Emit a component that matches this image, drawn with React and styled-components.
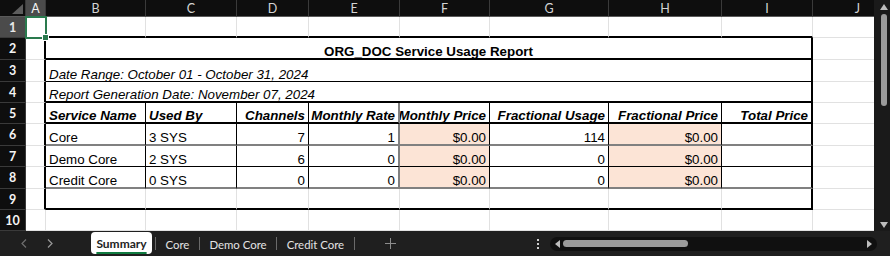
import React from "react";
import styled, { createGlobalStyle } from "styled-components";

const GlobalStyle = createGlobalStyle`
  html, body {
    margin: 0;
    padding: 0;
    background: #1f1f1f;
  }
  body {
    width: 890px;
    height: 256px;
    overflow: hidden;
  }
`;

const COLS = ["A", "B", "C", "D", "E", "F", "G", "H", "I", "J"];
const WIDTHS = [20, 100, 91, 72, 91, 90, 119, 113, 91, 90];
const HEIGHTS = [21, 22, 22, 21, 21, 22, 21, 22, 21, 21];

const LINE = {
  grid: "1px solid #e1e1e1",
  thin: "1px solid #000",
  medium: "2px solid #000",
  gray: "2px solid #808080",
};

const PEACH = "#fce4d6";

const HEAD = [
  { text: "Service Name" },
  { text: "Used By" },
  { text: "Channels", align: "right" },
  { text: "Monthly Rate", align: "right" },
  { text: "Monthly Price", align: "right" },
  { text: "Fractional Usage", align: "right" },
  { text: "Fractional Price", align: "right" },
  { text: "Total Price", align: "right" },
];

const ROWS = [
  ["Core", "3 SYS", "7", "1", "$0.00", "114", "$0.00", ""],
  ["Demo Core", "2 SYS", "6", "0", "$0.00", "0", "$0.00", ""],
  ["Credit Core", "0 SYS", "0", "0", "$0.00", "0", "$0.00", ""],
];

const BOTTOMS = { 1: "medium", 2: "medium", 3: "thin", 4: "medium", 5: "medium", 6: "gray", 7: "thin", 8: "gray", 9: "medium" };

function rightLine(row, last) {
  if (row >= 2 && row <= 9 && (last === 0 || last === 8)) return "medium";
  if (row >= 5 && row <= 8 && last >= 1 && last <= 7) return last === 4 ? "gray" : "thin";
  return "grid";
}

function bottomLine(row, col) {
  if (col >= 1 && col <= 8 && BOTTOMS[row]) return BOTTOMS[row];
  return "grid";
}

function buildRow(row) {
  if (row === 2) return [{ col: 1, span: 8, text: "ORG_DOC Service Usage Report", bold: true, align: "center" }];
  if (row === 3) return [{ col: 1, span: 8, text: "Date Range: October 01 - October 31, 2024", italic: true }];
  if (row === 4) return [{ col: 1, span: 8, text: "Report Generation Date: November 07, 2024", italic: true }];
  if (row === 5) return HEAD.map((h, i) => ({ col: i + 1, text: h.text, align: h.align, bold: true, italic: true }));
  if (row >= 6 && row <= 8) {
    return ROWS[row - 6].map((v, i) => ({
      col: i + 1,
      text: v,
      align: i < 2 ? "left" : "right",
      fill: i === 4 || i === 6 ? PEACH : null,
    }));
  }
  return [];
}

export default function App() {
  const rows = [];
  for (let r = 1; r <= 10; r++) {
    const specials = buildRow(r);
    const cells = [];
    let c = 0;
    while (c < COLS.length) {
      const s = specials.find((x) => x.col === c);
      const span = s ? s.span || 1 : 1;
      const last = c + span - 1;
      cells.push(
        <Cell
          key={`${r}-${c}`}
          $col={c + 2}
          $row={r + 1}
          $span={span}
          $r={rightLine(r, last)}
          $b={bottomLine(r, c)}
          $fill={s && s.fill}
          $align={s && s.align}
          $bold={s && s.bold}
          $italic={s && s.italic}
        >
          {s ? s.text : null}
          {r === 1 && c === 0 && (
            <Selection>
              <FillHandle />
            </Selection>
          )}
        </Cell>
      );
      c += span;
    }
    rows.push(
      <RowHead key={`h${r}`} $row={r + 1} $active={r === 1}>
        {r}
      </RowHead>
    );
    rows.push(...cells);
  }

  return (
    <>
      <GlobalStyle />
      <Window>
        <Workspace>
          <Sheet>
            <Corner>
              <CornerMark />
            </Corner>
            {COLS.map((l, i) => (
              <ColHead key={l} $col={i + 2} $active={i === 0}>
                {l}
              </ColHead>
            ))}
            {rows}
          </Sheet>
          <VScroll>
            <Arrow viewBox="0 0 8 6" width="8" height="6">
              <polygon points="0,6 4,0 8,6" fill="#bdbdbd" />
            </Arrow>
            <VThumb />
            <Spacer />
            <Arrow viewBox="0 0 8 6" width="8" height="6">
              <polygon points="0,0 8,0 4,6" fill="#bdbdbd" />
            </Arrow>
          </VScroll>
        </Workspace>
        <TabBar>
          <Nav>
            <svg width="6" height="9" viewBox="0 0 6 9">
              <polyline points="5,0.5 1,4.5 5,8.5" fill="none" stroke="#6f6f6f" strokeWidth="1.2" />
            </svg>
            <svg width="6" height="9" viewBox="0 0 6 9">
              <polyline points="1,0.5 5,4.5 1,8.5" fill="none" stroke="#9a9a9a" strokeWidth="1.2" />
            </svg>
          </Nav>
          <ActiveTab>Summary</ActiveTab>
          <Sep $first />
          <Tab>Core</Tab>
          <Sep />
          <Tab>Demo Core</Tab>
          <Sep />
          <Tab>Credit Core</Tab>
          <Sep />
          <AddTab>
            <svg width="11" height="11" viewBox="0 0 11 11">
              <path d="M5.5 0v11M0 5.5h11" stroke="#8c8c8c" strokeWidth="1" />
            </svg>
          </AddTab>
          <Spacer />
          <Dots>
            <i />
            <i />
            <i />
          </Dots>
          <HScroll>
            <svg width="5" height="8" viewBox="0 0 5 8">
              <polygon points="5,0 0,4 5,8" fill="#bdbdbd" />
            </svg>
            <HThumb />
            <Spacer />
            <svg width="5" height="8" viewBox="0 0 5 8">
              <polygon points="0,0 5,4 0,8" fill="#bdbdbd" />
            </svg>
          </HScroll>
        </TabBar>
      </Window>
    </>
  );
}

const Window = styled.div`
  width: 890px;
  height: 256px;
  display: flex;
  flex-direction: column;
  background: #1f1f1f;
  overflow: hidden;
`;

const Workspace = styled.div`
  display: flex;
  height: 231px;
`;

const Sheet = styled.div`
  display: grid;
  grid-template-columns: 26px ${WIDTHS.map((w) => `${w}px`).join(" ")};
  grid-template-rows: 17px ${HEIGHTS.map((h) => `${h}px`).join(" ")};
  width: 874px;
  height: 231px;
  overflow: hidden;
  background: #fff;
  font-family: "Liberation Sans", Arial, sans-serif;
  font-size: 13.33px;
  color: #000;
`;

const Corner = styled.div`
  grid-column: 1;
  grid-row: 1;
  background: #0e0e0e;
  border-right: 1px solid #3a3a3a;
  border-bottom: 1px solid #5a5a5a;
  display: flex;
  align-items: flex-end;
  justify-content: flex-end;
  padding: 0 2px 2px 0;
`;

const CornerMark = styled.div`
  width: 0;
  height: 0;
  border-left: 11px solid transparent;
  border-bottom: 10px solid #5d5d5d;
`;

const ColHead = styled.div`
  grid-column: ${(p) => p.$col};
  grid-row: 1;
  background: ${(p) => (p.$active ? "#4b4b4b" : "#0e0e0e")};
  color: ${(p) => (p.$active ? "#f2f2f2" : "#d4d4d4")};
  border-right: 1px solid #3a3a3a;
  border-bottom: 1px solid #5a5a5a;
  display: flex;
  align-items: center;
  justify-content: center;
  font-family: Lato, "Liberation Sans", sans-serif;
  font-size: 12.5px;
`;

const RowHead = styled.div`
  grid-column: 1;
  grid-row: ${(p) => p.$row};
  background: ${(p) => (p.$active ? "#4b4b4b" : "#0e0e0e")};
  color: ${(p) => (p.$active ? "#e8e8e8" : "#f4f4f4")};
  border-right: 1px solid #3a3a3a;
  border-bottom: 1px solid #3a3a3a;
  display: flex;
  align-items: center;
  justify-content: center;
  font-family: Lato, "Liberation Sans", sans-serif;
  font-size: 12.5px;
  font-weight: 700;
`;

const Cell = styled.div`
  position: relative;
  grid-column: ${(p) => p.$col} / span ${(p) => p.$span};
  grid-row: ${(p) => p.$row};
  border-right: ${(p) => LINE[p.$r]};
  border-bottom: ${(p) => LINE[p.$b]};
  background: ${(p) => p.$fill || "#fff"};
  display: flex;
  align-items: flex-end;
  justify-content: ${(p) =>
    p.$align === "right" ? "flex-end" : p.$align === "center" ? "center" : "flex-start"};
  padding: 0 3px;
  line-height: 12px;
  font-weight: ${(p) => (p.$bold ? 700 : 400)};
  font-style: ${(p) => (p.$italic ? "italic" : "normal")};
  white-space: nowrap;
  overflow: ${(p) => (p.$row === 2 ? "visible" : "hidden")};
`;

const Selection = styled.div`
  position: absolute;
  left: -1px;
  top: -1px;
  right: -2px;
  bottom: -2px;
  border: 2px solid #2a7a4e;
  pointer-events: none;
  z-index: 2;
`;

const FillHandle = styled.div`
  position: absolute;
  right: -4px;
  bottom: -4px;
  width: 5px;
  height: 5px;
  background: #2a7a4e;
  border: 1px solid #fff;
`;

const VScroll = styled.div`
  width: 16px;
  height: 231px;
  background: #1a1a1a;
  display: flex;
  flex-direction: column;
  align-items: center;
  padding: 4px 0 3px 4px;
  box-sizing: border-box;
  gap: 4px;
`;

const Arrow = styled.svg`
  flex: none;
`;

const VThumb = styled.div`
  width: 6px;
  height: 92px;
  border-radius: 3px;
  background: #9b9b9b;
`;

const Spacer = styled.div`
  flex: 1;
`;

const TabBar = styled.div`
  height: 25px;
  display: flex;
  align-items: center;
  background: #1f1f1f;
  font-family: Lato, "Liberation Sans", sans-serif;
  font-size: 11.4px;
  color: #e4e4e4;
`;

const Nav = styled.div`
  width: 91px;
  display: flex;
  align-items: center;
  padding-left: 21px;
  gap: 20px;
  box-sizing: border-box;
`;

const ActiveTab = styled.div`
  align-self: flex-start;
  width: 61px;
  height: 22px;
  margin-top: 1px;
  box-sizing: border-box;
  background: #fff;
  color: #222;
  font-size: 12px;
  font-weight: 700;
  border-radius: 4px;
  display: flex;
  align-items: center;
  justify-content: center;
  padding-top: 1px;
  text-decoration: underline;
  text-decoration-color: #107c41;
  text-decoration-thickness: 2px;
  text-underline-offset: 4px;
`;

const Tab = styled.div`
  padding: 2px 9.5px 0;
  white-space: nowrap;
`;

const Sep = styled.div`
  width: 1px;
  height: 13px;
  background: #6a6a6a;
  margin-left: ${(p) => (p.$first ? 3 : 0)}px;
`;

const AddTab = styled.div`
  width: 72px;
  display: flex;
  justify-content: center;
  align-items: center;
`;

const Dots = styled.div`
  display: flex;
  flex-direction: column;
  gap: 2px;
  margin-right: 11px;

  i {
    display: block;
    width: 2px;
    height: 2px;
    background: #cfcfcf;
  }
`;

const HScroll = styled.div`
  width: 327px;
  height: 14px;
  margin-right: 13px;
  border-radius: 7px;
  background: #101010;
  display: flex;
  align-items: center;
  padding: 0 5px;
  gap: 3px;
  box-sizing: border-box;
`;

const HThumb = styled.div`
  width: 125px;
  height: 7px;
  border-radius: 4px;
  background: #9b9b9b;
`;
